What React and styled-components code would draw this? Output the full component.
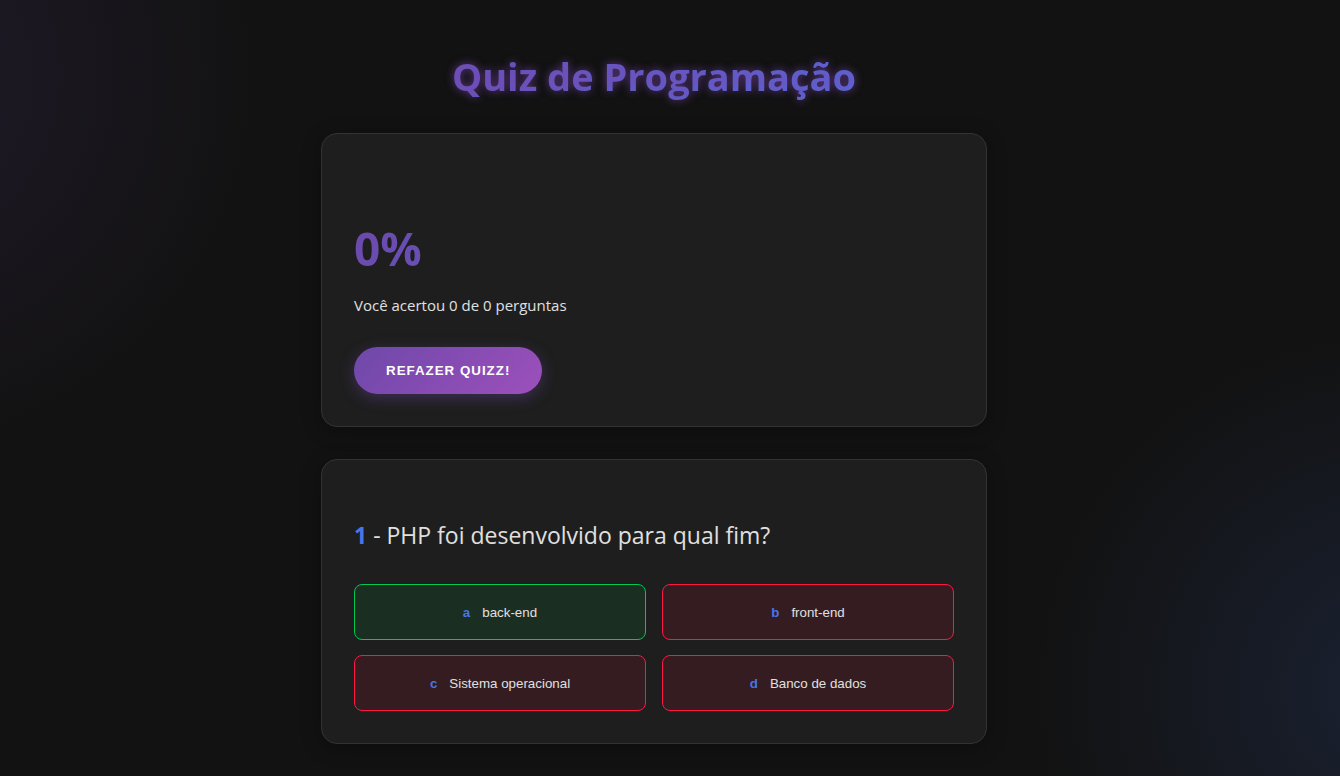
import React from "react";
import styled, { createGlobalStyle } from "styled-components";

const GlobalStyle = createGlobalStyle`
  *, *::before, *::after { box-sizing: border-box; }
  body {
    margin: 0;
    background: #121212;
    color: #e0e0e0;
    font-family: "Segoe UI", "Open Sans", sans-serif;
    font-size: 15px;
  }
`;

const Page = styled.div`
  min-height: 100vh;
  padding: 48px 32px 32px 0;
  display: flex;
  flex-direction: column;
  align-items: center;
  background:
    radial-gradient(circle 380px at -120px 75px, rgba(110, 72, 170, 0.16), transparent),
    radial-gradient(circle 360px at calc(100% + 54px) calc(100% - 86px), rgba(71, 118, 230, 0.15), transparent);
`;

const Content = styled.main`
  width: 100%;
  max-width: 666px;
  display: flex;
  flex-direction: column;
`;

const Title = styled.h1`
  margin: 0 0 29px;
  font-size: 38px;
  line-height: 56px;
  font-weight: 700;
  text-align: center;
  color: transparent;
  background: linear-gradient(135deg, #6e48aa, #4776e6);
  background-clip: text;
  -webkit-background-clip: text;
  text-shadow: 0 0 8px rgba(125, 72, 180, 0.7);
`;

const Card = styled.section`
  padding: 32px;
  background: #1e1e1e;
  border: 1px solid #333;
  border-radius: 16px;
  box-shadow: 0 4px 20px rgba(0, 0, 0, 0.3);

  & + & {
    margin-top: 32px;
  }
`;

const Score = styled.h2`
  width: 100%;
  margin: 50px 0 13px;
  font-size: 46px;
  line-height: 64px;
  font-weight: 700;
  color: transparent;
  background: linear-gradient(135deg, #6e48aa, #4776e6);
  background-clip: text;
  -webkit-background-clip: text;
`;

const Summary = styled.p`
  margin: 0 0 30px;
  line-height: 24px;
`;

const RetryButton = styled.button`
  display: block;
  padding: 16px 32px;
  border: 0;
  border-radius: 50px;
  background: linear-gradient(135deg, #6e48aa, #9d50bb);
  box-shadow: 0 4px 15px rgba(110, 72, 170, 0.4);
  color: #fff;
  font-family: Arial, "Liberation Sans", sans-serif;
  font-weight: 600;
  letter-spacing: 1px;
  text-transform: uppercase;
  cursor: pointer;
`;

const Question = styled.h3`
  margin: 24px 0 30px;
  font-size: 23px;
  line-height: 38px;
  font-weight: 400;
`;

const Marker = styled.span`
  color: #4776e6;
  font-weight: 700;
`;

const Options = styled.div`
  display: grid;
  grid-template-columns: repeat(2, 1fr);
  gap: 15px 16px;
`;

const Option = styled.button`
  display: flex;
  align-items: center;
  justify-content: center;
  gap: 12px;
  min-height: 56px;
  padding: 16px;
  border: 1px solid ${(p) => (p.$correct ? "#00c853" : "#ff1744")};
  border-radius: 8px;
  background: ${(p) => (p.$correct ? "rgba(0, 200, 83, 0.1)" : "rgba(255, 23, 68, 0.1)")};
  color: #e0e0e0;
  font-family: Arial, "Liberation Sans", sans-serif;
  cursor: pointer;
`;

const options = [
  { key: "a", label: "back-end", correct: true },
  { key: "b", label: "front-end", correct: false },
  { key: "c", label: "Sistema operacional", correct: false },
  { key: "d", label: "Banco de dados", correct: false },
];

export default function App() {
  return (
    <>
      <GlobalStyle />
      <Page>
        <Content>
          <Title>Quiz de Programação</Title>
          <Card>
            <Score>0%</Score>
            <Summary>Você acertou 0 de 0 perguntas</Summary>
            <RetryButton type="button">Refazer Quizz!</RetryButton>
          </Card>
          <Card>
            <Question>
              <Marker>1</Marker> - PHP foi desenvolvido para qual fim?
            </Question>
            <Options>
              {options.map((o) => (
                <Option key={o.key} type="button" $correct={o.correct}>
                  <Marker>{o.key}</Marker>
                  <span>{o.label}</span>
                </Option>
              ))}
            </Options>
          </Card>
        </Content>
      </Page>
    </>
  );
}
